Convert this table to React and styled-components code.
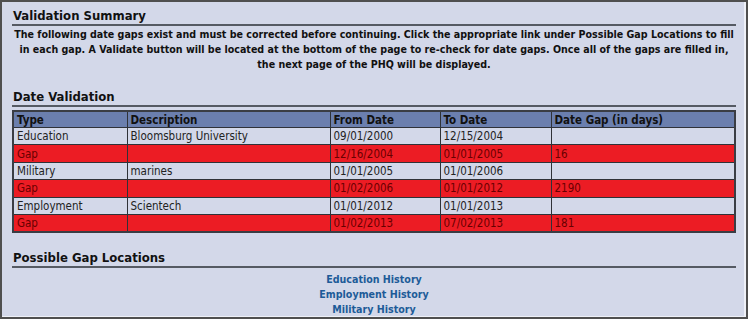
import styled, {createGlobalStyle} from "styled-components";

const GlobalStyle = createGlobalStyle`
  html, body {
    margin: 0;
    padding: 0;
    background: #d3d8e9;
  }
  body {
    font-family: "DejaVu Sans Condensed", "Liberation Sans", sans-serif;
  }
`

const Frame = styled.div`
  width: 748px;
  height: 319px;
  box-sizing: border-box;
  border: 2px solid #4f4f4f;
  box-shadow: inset -2px -1px 0 #eef0f7;
  background: #d3d8e9;
  padding: 5px 10px 0 10px;
  color: #111;
`

const Heading = styled.h2`
  margin: ${p => p.$top}px 0 0 0;
  font-size: 13px;
  line-height: 17px;
  font-weight: bold;
  color: #111;
  border-bottom: 2px solid #555a63;
  padding-left: 1px;
`

const Summary = styled.p`
  margin: 1px 0 0 0;
  font-size: 10.6px;
  line-height: 15px;
  font-weight: bold;
  text-align: center;
  color: #111;
`

const Table = styled.table`
  width: 100%;
  margin-top: 3px;
  border-collapse: collapse;
  table-layout: fixed;
  border: 2px solid #3a3d44;
  font-size: 11.5px;
`

const HeadCell = styled.th`
  box-sizing: border-box;
  background: #6b7fae;
  text-align: left;
  font-weight: bold;
  font-size: 11.5px;
  height: 16.5px;
  padding: 0 3px;
  border: 1px solid #2f3238;
  color: #111;
  width: ${p => (p.$w ? `${p.$w}px` : "auto")};
`

const Cell = styled.td`
  height: 16.4px;
  padding: 0 3px;
  border: 1px solid #2f3238;
  background: ${p => (p.$gap ? "#ec1c24" : "#d3d8e9")};
  color: ${p => (p.$gap ? "#6a0000" : "#222")};
  white-space: nowrap;
`

const Links = styled.div`
  margin-top: 4px;
  display: flex;
  flex-direction: column;
  align-items: center;
`

const GapLink = styled.a`
  font-size: 10.6px;
  line-height: 15px;
  font-weight: bold;
  color: #1d5b98;
  text-decoration: none;
  cursor: pointer;
`

const rows = [
    {type: "Education", desc: "Bloomsburg University", from: "09/01/2000", to: "12/15/2004", days: ""},
    {type: "Gap", desc: "", from: "12/16/2004", to: "01/01/2005", days: "16"},
    {type: "Military", desc: "marines", from: "01/01/2005", to: "01/01/2006", days: ""},
    {type: "Gap", desc: "", from: "01/02/2006", to: "01/01/2012", days: "2190"},
    {type: "Employment", desc: "Scientech", from: "01/01/2012", to: "01/01/2013", days: ""},
    {type: "Gap", desc: "", from: "01/02/2013", to: "07/02/2013", days: "181"},
]

export default function App() {
    return <>
        <GlobalStyle/>
        <Frame>
            <Heading $top={0}>Validation Summary</Heading>
            <Summary>
                The following date gaps exist and must be corrected before continuing. Click the appropriate link under Possible Gap Locations to fill in each gap. A Validate button will be located at the bottom of the page to re-check for date gaps. Once all of the gaps are filled in, the next page of the PHQ will be displayed.
            </Summary>
            <Heading $top={16}>Date Validation</Heading>
            <Table>
                <thead>
                    <tr>
                        <HeadCell $w={114}>Type</HeadCell>
                        <HeadCell $w={203}>Description</HeadCell>
                        <HeadCell $w={110}>From Date</HeadCell>
                        <HeadCell $w={111}>To Date</HeadCell>
                        <HeadCell>Date Gap (in days)</HeadCell>
                    </tr>
                </thead>
                <tbody>
                    {rows.map((r, i) => {
                        const gap = r.type === "Gap";
                        return (
                            <tr key={i}>
                                <Cell $gap={gap}>{r.type}</Cell>
                                <Cell $gap={gap}>{r.desc}</Cell>
                                <Cell $gap={gap}>{r.from}</Cell>
                                <Cell $gap={gap}>{r.to}</Cell>
                                <Cell $gap={gap}>{r.days}</Cell>
                            </tr>
                        );
                    })}
                </tbody>
            </Table>
            <Heading $top={16}>Possible Gap Locations</Heading>
            <Links>
                <GapLink>Education History</GapLink>
                <GapLink>Employment History</GapLink>
                <GapLink>Military History</GapLink>
            </Links>
        </Frame>
    </>
}
